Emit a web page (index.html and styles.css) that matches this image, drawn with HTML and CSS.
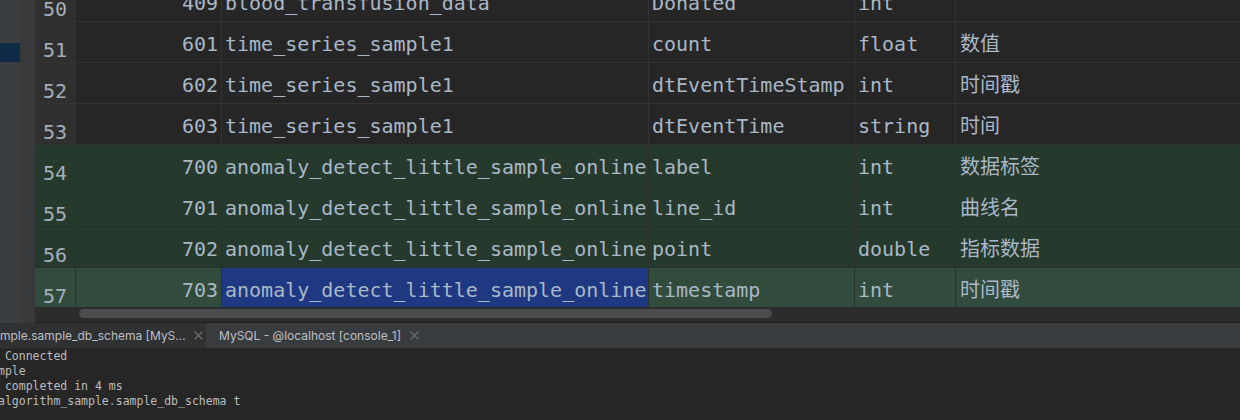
FILE: index.html
```html
<!DOCTYPE html>
<html>
<head>
<meta charset="utf-8">
<link rel="stylesheet" href="styles.css">
</head>
<body>
<div class="top">
  <div class="side"><div class="side-sel"></div></div>
  <div class="strip"></div>
  <div class="grid-area">
    <div class="viewport">
      <div class="rows">
        <div class="row"><div class="num">50</div><div class="c id">409</div><div class="c">blood_transfusion_data</div><div class="c">Donated</div><div class="c">int</div><div class="c"></div></div>
        <div class="row"><div class="num">51</div><div class="c id">601</div><div class="c">time_series_sample1</div><div class="c">count</div><div class="c">float</div><div class="c cjk">数值</div></div>
        <div class="row"><div class="num">52</div><div class="c id">602</div><div class="c">time_series_sample1</div><div class="c">dtEventTimeStamp</div><div class="c">int</div><div class="c cjk">时间戳</div></div>
        <div class="row"><div class="num">53</div><div class="c id">603</div><div class="c">time_series_sample1</div><div class="c">dtEventTime</div><div class="c">string</div><div class="c cjk">时间</div></div>
        <div class="row added"><div class="num">54</div><div class="c id">700</div><div class="c">anomaly_detect_little_sample_online</div><div class="c">label</div><div class="c">int</div><div class="c cjk">数据标签</div></div>
        <div class="row added"><div class="num">55</div><div class="c id">701</div><div class="c">anomaly_detect_little_sample_online</div><div class="c">line_id</div><div class="c">int</div><div class="c cjk">曲线名</div></div>
        <div class="row added"><div class="num">56</div><div class="c id">702</div><div class="c">anomaly_detect_little_sample_online</div><div class="c">point</div><div class="c">double</div><div class="c cjk">指标数据</div></div>
        <div class="row added current"><div class="num">57</div><div class="c id">703</div><div class="c selected">anomaly_detect_little_sample_online</div><div class="c">timestamp</div><div class="c">int</div><div class="c cjk">时间戳</div></div>
      </div>
    </div>
    <div class="hscroll"><div class="thumb"></div></div>
  </div>
</div>
<div class="tabbar">
  <div class="tab tab-first">
    <span class="tab-label">mple.sample_db_schema [MyS…</span>
    <svg class="close" width="9" height="9" viewBox="0 0 9 9"><path d="M0.5 0.5 L8.5 8.5 M8.5 0.5 L0.5 8.5" stroke="#6c6e71" stroke-width="1.1" fill="none"/></svg>
  </div>
  <div class="tab">
    <span class="tab-label">MySQL - @localhost [console_1]</span>
    <svg class="close" width="9" height="9" viewBox="0 0 9 9"><path d="M0.5 0.5 L8.5 8.5 M8.5 0.5 L0.5 8.5" stroke="#6c6e71" stroke-width="1.1" fill="none"/></svg>
  </div>
</div>
<div class="console">
  <div class="line"> Connected</div>
  <div class="line">mple</div>
  <div class="line"> completed in 4 ms</div>
  <div class="line">algorithm_sample<span class="dot">.</span>sample_db_schema t</div>
</div>
</body>
</html>
```

FILE: styles.css
```css
html, body {
  margin: 0;
  padding: 0;
  background: #262626;
  overflow: hidden;
  width: 1240px;
  height: 420px;
}

.top {
  display: flex;
  height: 323px;
}

.side {
  width: 20px;
  background: #3b3e40;
  padding-top: 43px;
  box-sizing: border-box;
}

.side-sel {
  height: 19px;
  background: #0e2a47;
}

.strip {
  width: 15px;
  background: #37393b;
}

.grid-area {
  flex: 1;
  display: flex;
  flex-direction: column;
  min-width: 0;
}

.viewport {
  height: 309px;
  overflow: hidden;
  background: #262626;
}

.rows {
  margin-top: -19px;
}

.row {
  display: grid;
  grid-template-columns: 41px 146px 427px 206px 101px 1fr;
  height: 41px;
  box-sizing: border-box;
  border-bottom: 1px solid #333333;
  font-family: "DejaVu Sans Mono", monospace;
  font-size: 20px;
  color: #a9b7c6;
  white-space: nowrap;
}

.num {
  background: #2f2f2f;
  border-right: 1px solid #333333;
  padding: 16px 0 0 8px;
  line-height: 24px;
  color: #a4afba;
}

.c {
  border-right: 1px solid #333333;
  padding: 5px 3px 0 3px;
  line-height: 35px;
  overflow: hidden;
}

.c:last-child {
  border-right: 0;
}

.id {
  text-align: right;
}

.cjk {
  font-family: "DejaVu Sans Mono", "Noto Sans CJK SC", monospace;
  padding-left: 4px;
}

.row.added,
.row.added .num {
  background: #253a2d;
}

.row.added {
  border-bottom-color: #2a2d2b;
}

.row.added .c,
.row.added .num {
  border-right-color: #2c302d;
}

.row.current,
.row.current .num {
  background: #314b3d;
}

.c.selected {
  background: #1f3882;
}

.hscroll {
  height: 13px;
  background: #2c2c2c;
  border-bottom: 1px solid #1f1f1f;
  padding: 2px 0 0 44px;
  box-sizing: content-box;
}

.thumb {
  width: 693px;
  height: 9px;
  border-radius: 5px;
  background: #4b4c4e;
}

.tabbar {
  display: flex;
  height: 25px;
  background: #393c3f;
  border-bottom: 1px solid #2a2a2a;
  font-family: "Inter", "Liberation Sans", sans-serif;
  font-size: 12px;
  color: #bdbfc2;
}

.tab {
  display: flex;
  align-items: center;
  gap: 9px;
  padding: 0 0 0 13px;
  white-space: nowrap;
}

.tab-first {
  width: 206px;
  flex: none;
  box-sizing: border-box;
  padding-left: 0;
  background: #2f3133;
  gap: 8px;
}

.close {
  flex: none;
}

.console {
  font-family: "DejaVu Sans Mono", monospace;
  font-size: 11.5px;
  line-height: 15px;
  color: #bcbcbc;
  margin-left: -2px;
}

.line {
  white-space: pre;
  height: 15px;
}

.dot {
  color: #6f9fd6;
}
```
